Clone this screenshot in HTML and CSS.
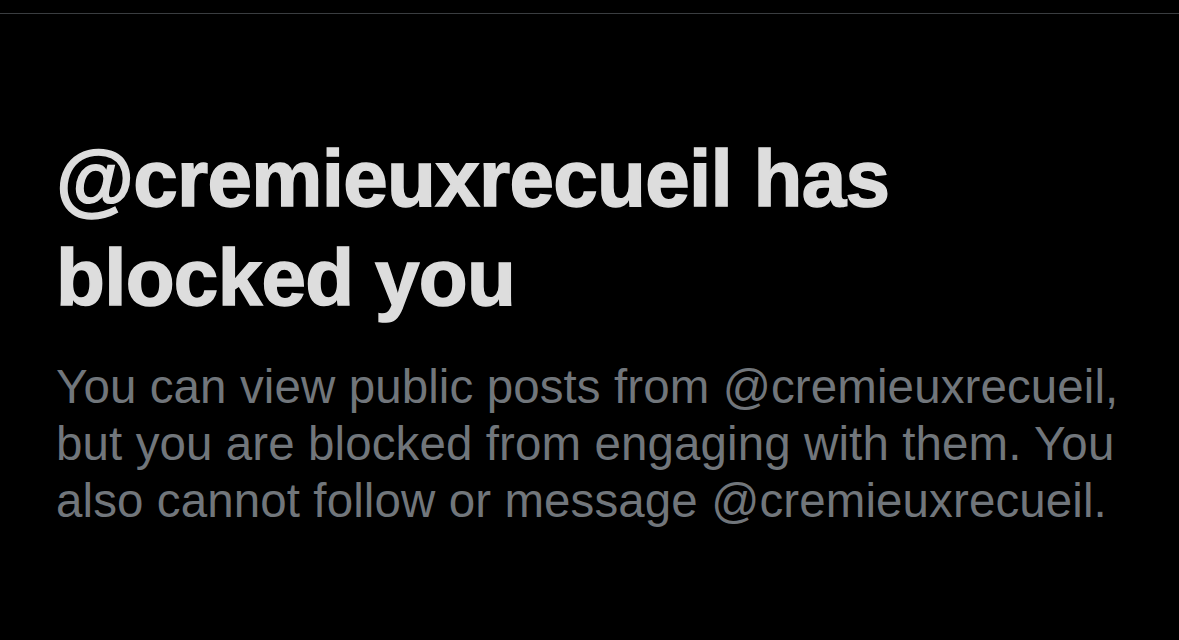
FILE: index.html
```html
<!DOCTYPE html>
<html lang="en">
<head>
<meta charset="utf-8">
<title>Blocked</title>
<link rel="stylesheet" href="styles.css">
</head>
<body>
<div class="topbar"></div>
<main class="notice">
  <h1 class="notice-title">@cremieuxrecueil has blocked you</h1>
  <p class="notice-text">You can view public posts from @cremieuxrecueil, but you are blocked from engaging with them. You also cannot follow or message @cremieuxrecueil.</p>
</main>
</body>
</html>
```

FILE: styles.css
```css
html, body {
  margin: 0;
  padding: 0;
  background: #000;
}
body {
  width: 1179px;
  height: 640px;
  overflow: hidden;
  font-family: "Liberation Sans", Arial, sans-serif;
}
.topbar {
  height: 13px;
  border-bottom: 1px solid #3a3d40;
}
.notice {
  padding: 115px 40px 0 56px;
  box-sizing: border-box;
  width: 1179px;
}
.notice-title {
  margin: 0;
  width: 880px;
  font-size: 80px;
  line-height: 99px;
  font-weight: 700;
  letter-spacing: -0.7px;
  color: #dddddd;
  -webkit-text-stroke: 1.5px #dddddd;
}
.notice-text {
  margin: 31px 0 0;
  font-size: 47.5px;
  line-height: 57px;
  letter-spacing: 0.1px;
  color: #71767b;
}
```
